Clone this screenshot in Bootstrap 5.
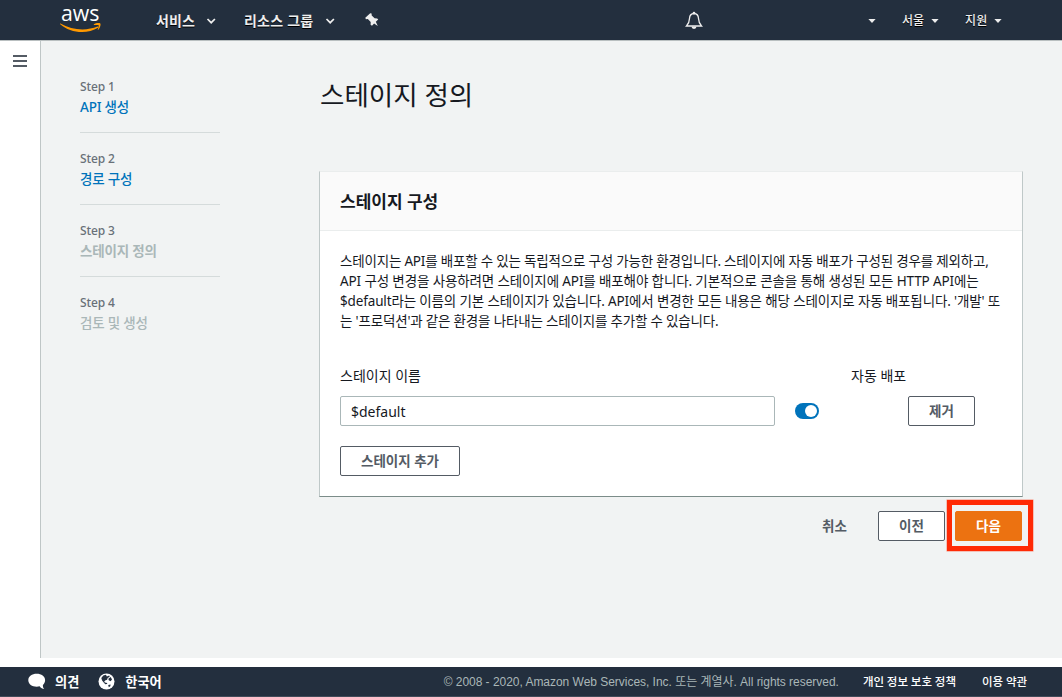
<!DOCTYPE html>
<html lang="ko">
<head>
<meta charset="utf-8">
<meta name="viewport" content="width=device-width, initial-scale=1">
<title>스테이지 정의</title>
<link href="https://cdn.jsdelivr.net/npm/bootstrap@5.3.0/dist/css/bootstrap.min.css" rel="stylesheet">
<style>
body{font-family:"Noto Sans","Noto Sans CJK KR",sans-serif;font-size:13.5px;line-height:20px;color:#16191f;background:#fff;height:697px;overflow:hidden}
.topbar{height:41px;background:#232f3e;border-bottom:1px solid #b9bfc0;color:#eee;text-shadow:0 1px 0 #000;padding-left:60px;flex:none}
.topbar svg{flex:none;overflow:visible}
.menu-main{font-weight:700;font-size:14px;letter-spacing:.1px;padding-top:1px}
.menu-group{margin-left:25px;letter-spacing:.25px}
.caret-wide{margin-left:8px;margin-top:2px}
.menu-side{font-weight:500;font-size:12px;width:359px;padding-left:165px}
.menu-side span{margin:1px 7px 0 26px}
.menu-side svg{margin-top:1px}
.rail{width:41px;border-right:1px solid #bfc6c6;padding:14px 0 0 13px;flex:none}
.workspace{background:#f1f3f3;padding:0 39px}
.steps{width:140px;margin-top:36px;flex:none}
.step-item{border-bottom:1px solid #d5dbdb;padding-bottom:15px;margin-bottom:16px}
.step-item:last-child{border:0}
.step-no{font-size:12px;font-weight:500;color:#687078;letter-spacing:-.15px}
.step-name{font-weight:500;color:#0073bb;text-decoration:none;display:block;letter-spacing:-.2px}
.step-off{color:#aab7b8}
.main-col{width:704px;margin-left:99px;flex:none}
.page-title{font-size:26.5px;line-height:36px;font-weight:400;margin:36px 0 58px 1px}
.panel{border:1px solid #bfc8c8;border-top-color:#eaeded;border-bottom-color:#7b8c89;border-radius:0;height:326px;color:inherit}
.panel-head{height:59px;background:#fafafa;border-bottom:1px solid #eaeded;padding:1px 20px 0;font-size:17px;font-weight:700}
.panel-content{padding:20px 20px 0}
.panel-text{margin:0 0 35px;white-space:nowrap}
.panel-text span{display:block}
.l1{letter-spacing:-.195px}
.l2{letter-spacing:-.125px}
.l3{letter-spacing:-.145px}
.l4{letter-spacing:-.18px}
.field-labels{font-size:14px;margin-bottom:10px}
.field-labels span:first-child{width:511px}
.field{height:30px;border:1px solid #aab7b8;border-radius:2px;width:435px;padding:1px 10px 0;font-size:14px;color:#16191f}
.toggle-switch{width:24px;height:16px;border-radius:8px;background:#0073bb;padding:2px;margin-left:20px}
.toggle-switch i{display:block;width:12px;height:12px;border-radius:50%;background:#fff;margin-left:8px}
.act{height:30px;padding:0;border:1px solid #545b64;border-radius:2px;background:#fff;color:#545b64;font-weight:700;font-size:13.5px;line-height:20px;white-space:nowrap}
.act-sm{width:67px}
.act-add{width:120px;margin-top:20px}
.act-next{background:#ec7211;border-color:#ec7211;color:#fff}
.act-link{background:transparent;border-color:transparent}
.actions{padding:14px 1px 0 0;gap:10px}
.highlight{position:absolute;left:-8px;top:-11px;width:86px;height:51px;border:5px solid #ff2a05;box-shadow:0 0 0 .5px #ff2a0580;pointer-events:none}
.botbar{height:30px;background:#232f3e;border-bottom:1px solid #414b59;color:#fff;padding:0 35px 0 28px;margin-top:9px;flex:none;font-size:13.2px;white-space:nowrap}
.legal{font-size:12px;font-family:"Liberation Sans","Noto Sans CJK KR",sans-serif;color:#aab7b8;letter-spacing:-.03px}
.legal-link{font-size:11.5px;font-weight:500;letter-spacing:-.05px}
</style>
</head>
<body class="d-flex flex-column">
<header class="topbar d-flex align-items-center">
  <svg width="42" height="40" viewBox="0 0 42 40"><text x="1" y="20.500" textLength="38.500" lengthAdjust="spacingAndGlyphs" font-family="Open Sans" font-weight="500" font-size="22.500" fill="#fff" style="text-shadow:none">aws</text><path d="M.4 23.600C12 30.500 27 31 37.500 26.600c1-.4 1.400.4.6 1.100C27 34.500 10 33 .2 24.200c-.4-.4-.2-.9.2-.6Z" fill="#f90"/><path d="M33.800 24.200c2-1.400 5.800-1.400 6.500-.7.7.7-.2 4.800-2 6.300-.4.300-.7.100-.5-.4.500-1.200 1.300-3.500.9-4.100-.5-.6-3-.4-4.300-.3-.5 0-.8-.4-.6-.8Z" fill="#f90"/></svg>
  <span class="menu-main" style="margin-left:54px">서비스</span>
  <svg class="caret-wide" width="16" height="10" viewBox="0 0 16 10"><path d="m4.500 3 3.700 3.700L11.900 3" fill="none" stroke="#eee" stroke-width="1.700"/></svg>
  <span class="menu-main menu-group">리소스 그룹</span>
  <svg class="caret-wide" width="16" height="10" viewBox="0 0 16 10"><path d="m4.500 3 3.700 3.700L11.900 3" fill="none" stroke="#eee" stroke-width="1.700"/></svg>
  <svg style="margin-left:27px" width="14" height="14" viewBox="0 0 14 14"><path d="M5.200.2 6.600.6 6.700 2.500l2.900 2.800 2.600.1 1 1.200-2.400 2.200 2 4.200-3.700-2.600-2.100 2.300-1.400-1 .1-2.700L2.800 6.100.9 6.300.3 4.800Z" fill="#eee"/></svg>
  <svg class="ms-auto" width="18" height="19" viewBox="0 0 18 19"><path d="M9 2.500c-3.400.2-4.400 2.500-4.500 5C4.400 11 3.700 12.600 1.500 15h15c-2.200-2.400-2.900-4-3-7.500-.1-2.500-1.100-4.800-4.500-5Z" fill="none" stroke="#eee" stroke-width="1.300"/><circle cx="9" cy="2" r="1.300" fill="#eee"/><path d="M6.500 15.500h5a2.500 2.500 0 0 1-5 0Z" fill="#eee"/></svg>
  <div class="menu-side d-flex align-items-center">
    <svg width="8" height="6" viewBox="0 0 8 6"><path d="M.4 1h7.200L4 5Z" fill="#eee"/></svg>
    <span>서울</span>
    <svg width="8" height="6" viewBox="0 0 8 6"><path d="M.4 1h7.200L4 5Z" fill="#eee"/></svg>
    <span>지원</span>
    <svg width="8" height="6" viewBox="0 0 8 6"><path d="M.4 1h7.200L4 5Z" fill="#eee"/></svg>
  </div>
</header>
<div class="d-flex flex-grow-1">
  <aside class="rail"><svg class="d-block" width="14" height="12" viewBox="0 0 14 12"><path d="M0 1h14M0 6h14M0 11h14" stroke="#545b64" stroke-width="2"/></svg></aside>
  <div class="workspace d-flex flex-grow-1">
    <nav class="steps">
      <div class="step-item"><div class="step-no">Step 1</div><a class="step-name" href="#">API 생성</a></div>
      <div class="step-item"><div class="step-no">Step 2</div><a class="step-name" href="#">경로 구성</a></div>
      <div class="step-item"><div class="step-no">Step 3</div><span class="step-name step-off fw-bold">스테이지 정의</span></div>
      <div class="step-item"><div class="step-no">Step 4</div><span class="step-name step-off">검토 및 생성</span></div>
    </nav>
    <main class="main-col">
      <h1 class="page-title">스테이지 정의</h1>
      <section class="panel card">
        <div class="panel-head d-flex align-items-center">스테이지 구성</div>
        <div class="panel-content">
          <p class="panel-text"><span class="l1">스테이지는 API를 배포할 수 있는 독립적으로 구성 가능한 환경입니다. 스테이지에 자동 배포가 구성된 경우를 제외하고,</span><span class="l2">API 구성 변경을 사용하려면 스테이지에 API를 배포해야 합니다. 기본적으로 콘솔을 통해 생성된 모든 HTTP API에는</span><span class="l3">$default라는 이름의 기본 스테이지가 있습니다. API에서 변경한 모든 내용은 해당 스테이지로 자동 배포됩니다. '개발' 또</span><span class="l4">는 '프로덕션'과 같은 환경을 나타내는 스테이지를 추가할 수 있습니다.</span></p>
          <div class="field-labels d-flex"><span>스테이지 이름</span><span>자동 배포</span></div>
          <div class="d-flex align-items-center">
            <input class="field" type="text" value="$default">
            <div class="toggle-switch"><i></i></div>
            <button class="act act-sm" style="margin-left:89px">제거</button>
          </div>
          <button class="act act-add">스테이지 추가</button>
        </div>
      </section>
      <div class="actions d-flex justify-content-end">
        <button class="act act-sm act-link">취소</button>
        <button class="act act-sm">이전</button>
        <div class="position-relative"><button class="act act-sm act-next">다음</button><div class="highlight"></div></div>
      </div>
    </main>
  </div>
</div>
<footer class="botbar d-flex align-items-center">
  <svg width="18" height="17" viewBox="0 0 18 17"><path d="M8.700.8C4 .8.300 3.500.300 7.200s3.700 6.500 8.400 6.500c1 0 2-.1 2.900-.4 1.200 1.800 3 2.700 4.600 2.800-1-1.200-1.400-2.600-1.300-4.200 1.400-1.200 2.200-2.800 2.200-4.700C17.100 3.500 13.400.8 8.700.8Z" fill="#fff"/></svg>
  <span class="fw-bold" style="margin-left:9px">의견</span>
  <svg style="margin-left:19px" width="17" height="17" viewBox="0 0 17 17"><circle cx="8.500" cy="8.500" r="8" fill="#fff"/><path d="m5.300 2.400 2.600-.6 1 1.600 2.300-.8.500 1.200-2 1.200-.6 1.700-2 .8-1 1.600 1.700.7 1.600.2-.5 1-1.600.3-1.600-1.900-1.600-2-.8-2.300ZM12.700 4l1.300 2.600-1.400 1.600-1.900-1-.3-1.500Zm-2.500 8 2.400-.5-.3 1.800-1.500 1Z" fill="#232f3e"/></svg>
  <span class="fw-bold" style="margin-left:10px">한국어</span>
  <span class="legal ms-auto">© 2008 - 2020, Amazon Web Services, Inc. 또는 계열사. All rights reserved.</span>
  <span class="legal-link" style="margin-left:24px">개인 정보 보호 정책</span>
  <span class="legal-link" style="margin-left:26px">이용 약관</span>
</footer>
<script src="https://cdn.jsdelivr.net/npm/bootstrap@5.3.0/dist/js/bootstrap.bundle.min.js"></script>
</body>
</html>
